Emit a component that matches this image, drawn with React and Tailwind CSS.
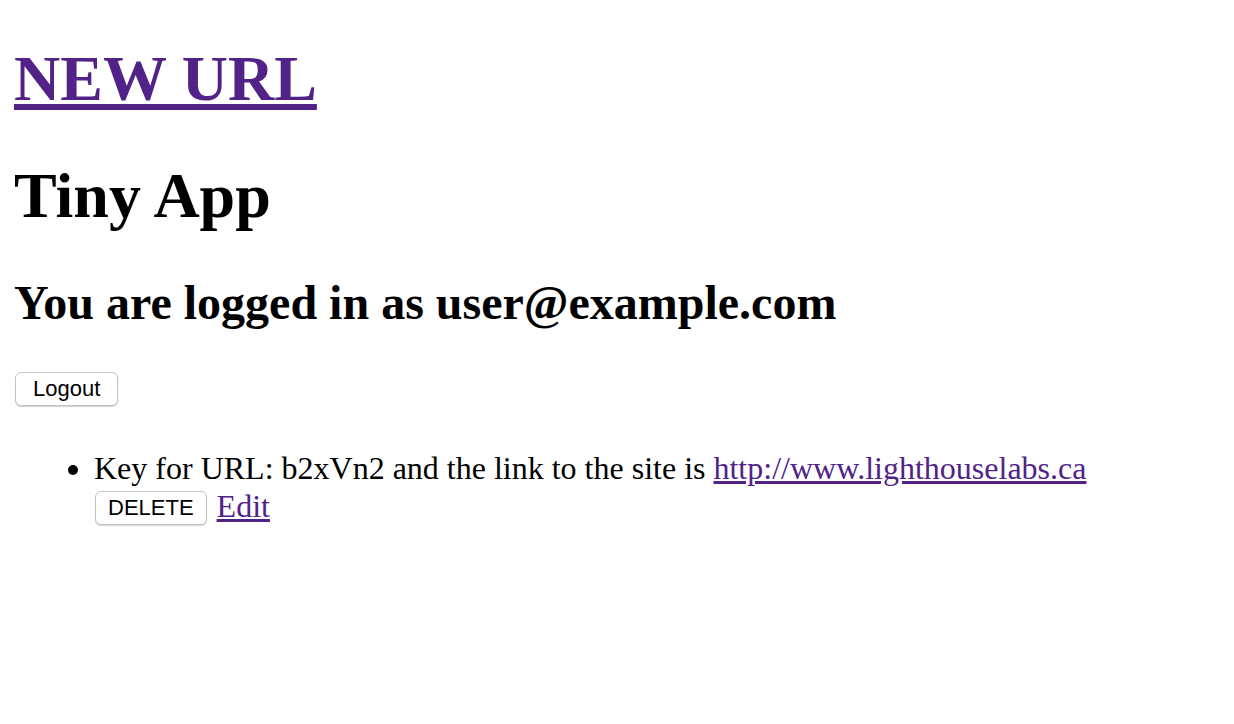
export default function App() {
  const btn =
    "h-[34px] bg-white border border-[#c4c4c4] rounded-[6px] shadow-[0_1px_1px_rgba(0,0,0,0.18)] font-['Liberation_Sans',Arial,sans-serif] text-[22px] leading-none text-black";

  return (
    <div className="min-h-screen bg-white px-[14px] font-['Liberation_Serif','Times_New_Roman',serif] text-[32px] leading-[1.15] text-black">
      <h1 className="pt-[42px] mb-[43px] text-[64px] font-bold leading-[1.15]">
        <a href="#" className="text-[#512388] underline">NEW URL</a>
      </h1>
      <h1 className="mb-[43px] text-[64px] font-bold leading-[1.15]">Tiny App</h1>
      <h2 className="mb-[42px] text-[48px] font-bold leading-[1.15]">You are logged in as user@example.com</h2>
      <form className="flex" onSubmit={(e) => e.preventDefault()}>
        <button className={`${btn} ml-[1px] px-[17px]`}>Logout</button>
      </form>
      <ul className="mt-[44px] list-disc pl-[80px]">
        <li>
          Key for URL: b2xVn2 and the link to the site is{" "}
          <a href="#" className="text-[#512388] underline">http://www.lighthouselabs.ca</a>
          <div className="flex items-center gap-[10px]">
            <form onSubmit={(e) => e.preventDefault()} className="flex">
              <button className={`${btn} mt-[4px] ml-[1px] px-[12px] text-[21px]`}>DELETE</button>
            </form>
            <a href="#" className="text-[#512388] underline">Edit</a>
          </div>
        </li>
      </ul>
    </div>
  );
}
